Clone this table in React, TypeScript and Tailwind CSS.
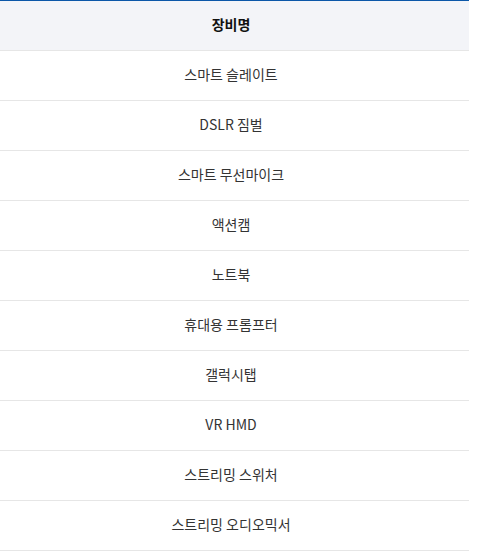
const items = [
  '스마트 슬레이트',
  'DSLR 짐벌',
  '스마트 무선마이크',
  '액션캠',
  '노트북',
  '휴대용 프롬프터',
  '갤럭시탭',
  'VR HMD',
  '스트리밍 스위처',
  '스트리밍 오디오믹서',
];

export default function App() {
  return (
    <div
      className="w-[469px] bg-white text-[14px]"
      style={{ fontFamily: '"Noto Sans CJK KR", "Noto Sans", sans-serif' }}
    >
      <div className="h-[51px] pr-[7px] pb-[2px] border-t border-b border-t-[#0b57a8] border-b-[#e6e6e6] bg-[#f3f4f8] flex items-center justify-center font-bold text-[#111]">
        장비명
      </div>
      {items.map((name) => (
        <div
          key={name}
          className="h-[50px] pr-[7px] pb-[2px] border-b border-[#e6e6e6] flex items-center justify-center text-[#333]"
        >
          {name}
        </div>
      ))}
    </div>
  );
}
